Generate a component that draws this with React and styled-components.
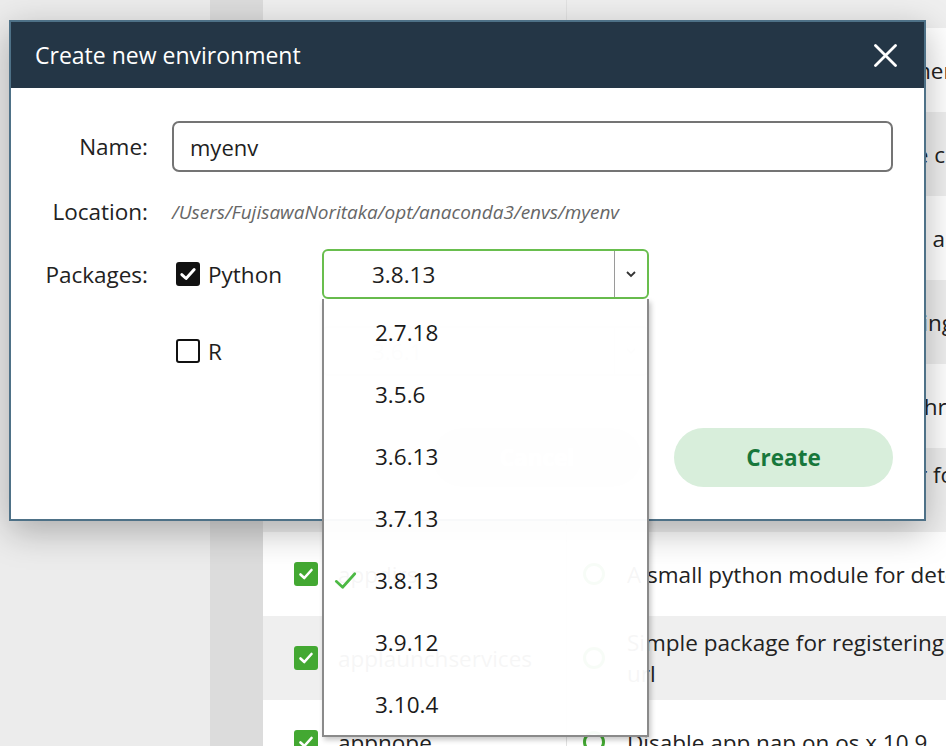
import React from "react";
import styled, { createGlobalStyle } from "styled-components";

const GlobalStyle = createGlobalStyle`
  body {
    margin: 0;
    font-family: "Open Sans", "Noto Sans", sans-serif;
    color: #1e1e1e;
  }
`;

const Page = styled.div`
  position: relative;
  display: flex;
  width: 946px;
  height: 746px;
  overflow: hidden;
  background: #ececec;
`;

const EnvPanel = styled.div`
  width: 210px;
  flex-shrink: 0;
  background: #ececec;
`;

const Gutter = styled.div`
  width: 53px;
  flex-shrink: 0;
  background: #dcdcdc;
`;

const PackageList = styled.div`
  flex: 1;
  display: flex;
  flex-direction: column;
  margin-top: -56px;
`;

const PkgRow = styled.div`
  height: 84px;
  flex-shrink: 0;
  display: grid;
  grid-template-columns: 75px 228px 61px 1fr;
  align-items: center;
  background: ${props => (props.$shade ? "#efefef" : "#ffffff")};
  font-size: 22.5px;
  white-space: nowrap;
`;

const GreenBox = styled.div`
  width: 24px;
  height: 24px;
  margin-left: 31px;
  border-radius: 3px;
  background: #43a832;
  display: flex;
  align-items: center;
  justify-content: center;
`;

const PkgName = styled.div`
  color: #222;
`;

const StatusCell = styled.div`
  height: 100%;
  border-left: 1px solid #e2e2e2;
  display: flex;
  align-items: center;
  padding-left: 16px;
`;

const Ring = styled.div`
  width: 16px;
  height: 16px;
  border-radius: 50%;
  border: 3px solid #43a832;
`;

const PkgDesc = styled.div`
  color: #222;
  line-height: 31px;
`;

const Modal = styled.div`
  position: absolute;
  left: 9px;
  top: 20px;
  width: 917px;
  height: 501px;
  box-sizing: border-box;
  border: 2px solid #4e7187;
  background: #ffffff;
  display: flex;
  flex-direction: column;
  box-shadow: 0 10px 34px rgba(0, 0, 0, 0.28);
`;

const ModalHeader = styled.div`
  height: 66px;
  flex-shrink: 0;
  background: #243646;
  display: flex;
  align-items: center;
  justify-content: space-between;
  padding: 0 27px 0 24px;
  color: #ffffff;
  font-size: 23px;
`;

const ModalBody = styled.div`
  padding: 33px 31px 0 0;
`;

const FormRow = styled.div`
  display: grid;
  grid-template-columns: 137px 1fr;
  column-gap: 24px;
  align-items: center;
  margin-top: ${props => props.$gap || 0}px;
  min-height: ${props => props.$h || 0}px;
`;

const Label = styled.div`
  text-align: right;
  font-size: 22.5px;
  color: #222;
`;

const TextInput = styled.div`
  height: 51px;
  box-sizing: border-box;
  border: 2px solid #747474;
  border-radius: 7px;
  display: flex;
  align-items: center;
  padding-left: 16px;
  font-size: 22px;
`;

const PathText = styled.div`
  font-size: 19px;
  font-style: italic;
  color: #666;
`;

const PackageLine = styled.div`
  display: flex;
  align-items: center;
`;

const CheckOption = styled.div`
  width: 150px;
  display: flex;
  align-items: center;
  gap: 8px;
  font-size: 22.5px;
`;

const CheckSquare = styled.div`
  width: 24px;
  height: 24px;
  box-sizing: border-box;
  margin-left: 4px;
  border-radius: 3px;
  border: 2px solid #111;
  background: ${props => (props.$checked ? "#111" : "#fff")};
  display: flex;
  align-items: center;
  justify-content: center;
`;

const SelectWrap = styled.div`
  position: relative;
  width: 327px;
  z-index: ${props => (props.$open ? 5 : 1)};
`;

const SelectBox = styled.div`
  height: 50px;
  box-sizing: border-box;
  border: 2px solid ${props => (props.$active ? "#69be4e" : "#dddddd")};
  border-radius: 6px;
  display: flex;
  font-size: 22.5px;
  color: ${props => (props.$active ? "#1e1e1e" : "#bbbbbb")};
  background: #fff;
`;

const SelectValue = styled.div`
  flex: 1;
  display: flex;
  align-items: center;
  padding-left: 48px;
`;

const SelectArrow = styled.div`
  width: 32px;
  border-left: 1px solid ${props => (props.$active ? "#9a9a9a" : "#e4e4e4")};
  display: flex;
  align-items: center;
  justify-content: center;
`;

const Dropdown = styled.div`
  position: absolute;
  top: 100%;
  left: 0;
  width: 100%;
  box-sizing: border-box;
  padding-top: 2px;
  border: 1px solid #8a8a8a;
  border-width: 0 2px 2px 2px;
  background: rgba(255, 255, 255, 0.96);
  box-shadow: 2px 3px 5px rgba(0, 0, 0, 0.22);
`;

const Option = styled.div`
  height: 62px;
  display: flex;
  align-items: center;
  font-size: 22.5px;
  color: #1a1a1a;
`;

const CheckSlot = styled.div`
  width: 51px;
  padding-left: 8px;
  box-sizing: border-box;
  display: flex;
  align-items: center;
`;

const ButtonRow = styled.div`
  display: flex;
  justify-content: flex-end;
  gap: 32px;
  margin-top: 52px;
`;

const PillButton = styled.div`
  height: 59px;
  width: ${props => props.$w}px;
  border-radius: 30px;
  display: flex;
  align-items: center;
  justify-content: center;
  font-size: 22.5px;
  font-weight: 700;
  background: ${props => (props.$primary ? "#d8eedb" : "#e6e6e6")};
  color: ${props => (props.$primary ? "#17773b" : "#ffffff")};
`;

const Tick = ({ size = 16, color = "#fff", width = 2.6 }) => (
  <svg width={size} height={size} viewBox="0 0 16 16">
    <path d="M2.5 8.5 L6.3 12 L13.5 4" fill="none" stroke={color} strokeWidth={width} strokeLinecap="round" strokeLinejoin="round" />
  </svg>
);

const packages = [
  { name: "alabaster", desc: "Configurable, python 2+3 compatible sphinx theme" },
  { name: "anaconda", desc: "Simplifies package management and deployment" },
  { name: "anaconda-client", desc: "Anaconda.org command line client library" },
  { name: "anaconda-navigator", desc: "Anaconda navigator desktop application" },
  { name: "anaconda-project", desc: "Tool for encapsulating, running, and reproducing" },
  { name: "anyio", desc: "Cross-platform async io for threading" },
  { name: "applaunch", desc: "High level compatibility layer for multiple", desc2: "implementations on python" },
  { name: "appdirs", desc: "A small python module for determining directories" },
  { name: "applaunchservices", desc: "Simple package for registering an app with apple launch services to handle", desc2: "url" },
  { name: "appnope", desc: "Disable app nap on os x 10.9" }
];

const versions = ["2.7.18", "3.5.6", "3.6.13", "3.7.13", "3.8.13", "3.9.12", "3.10.4"];

export default function App() {
  return (
    <Page>
      <GlobalStyle />
      <EnvPanel />
      <Gutter />
      <PackageList>
        {packages.map((pkg, index) => (
          <PkgRow key={pkg.name} $shade={index % 2 === 0}>
            <GreenBox>
              <Tick />
            </GreenBox>
            <PkgName>{pkg.name}</PkgName>
            <StatusCell>
              <Ring />
            </StatusCell>
            <PkgDesc>
              {pkg.desc}
              {pkg.desc2 ? <br /> : null}
              {pkg.desc2}
            </PkgDesc>
          </PkgRow>
        ))}
      </PackageList>

      <Modal>
        <ModalHeader>
          <span>Create new environment</span>
          <svg width="23" height="23" viewBox="0 0 23 23">
            <path d="M1.5 1.5 L21.5 21.5 M21.5 1.5 L1.5 21.5" stroke="#fff" strokeWidth="2.8" strokeLinecap="round" />
          </svg>
        </ModalHeader>
        <ModalBody>
          <FormRow>
            <Label>Name:</Label>
            <TextInput>myenv</TextInput>
          </FormRow>
          <FormRow $gap={24} $h={30}>
            <Label>Location:</Label>
            <PathText>/Users/FujisawaNoritaka/opt/anaconda3/envs/myenv</PathText>
          </FormRow>
          <FormRow $gap={22}>
            <Label>Packages:</Label>
            <PackageLine>
              <CheckOption>
                <CheckSquare $checked>
                  <Tick size={18} />
                </CheckSquare>
                Python
              </CheckOption>
              <SelectWrap $open>
                <SelectBox $active>
                  <SelectValue>3.8.13</SelectValue>
                  <SelectArrow $active>
                    <svg width="12" height="8" viewBox="0 0 12 8">
                      <path d="M2 2 L6 6 L10 2" fill="none" stroke="#333" strokeWidth="1.8" />
                    </svg>
                  </SelectArrow>
                </SelectBox>
                <Dropdown>
                  {versions.map(v => (
                    <Option key={v}>
                      <CheckSlot>
                        {v === "3.8.13" ? <Tick size={27} color="#4cb944" width={1.6} /> : null}
                      </CheckSlot>
                      {v}
                    </Option>
                  ))}
                </Dropdown>
              </SelectWrap>
            </PackageLine>
          </FormRow>
          <FormRow $gap={27}>
            <div />
            <PackageLine>
              <CheckOption>
                <CheckSquare />
                R
              </CheckOption>
              <SelectWrap>
                <SelectBox>
                  <SelectValue>3.6.1</SelectValue>
                  <SelectArrow>
                    <svg width="12" height="8" viewBox="0 0 12 8">
                      <path d="M2 2 L6 6 L10 2" fill="none" stroke="#ccc" strokeWidth="1.8" />
                    </svg>
                  </SelectArrow>
                </SelectBox>
              </SelectWrap>
            </PackageLine>
          </FormRow>
          <ButtonRow>
            <PillButton $w={210}>Cancel</PillButton>
            <PillButton $w={219} $primary>Create</PillButton>
          </ButtonRow>
        </ModalBody>
      </Modal>
    </Page>
  );
}
